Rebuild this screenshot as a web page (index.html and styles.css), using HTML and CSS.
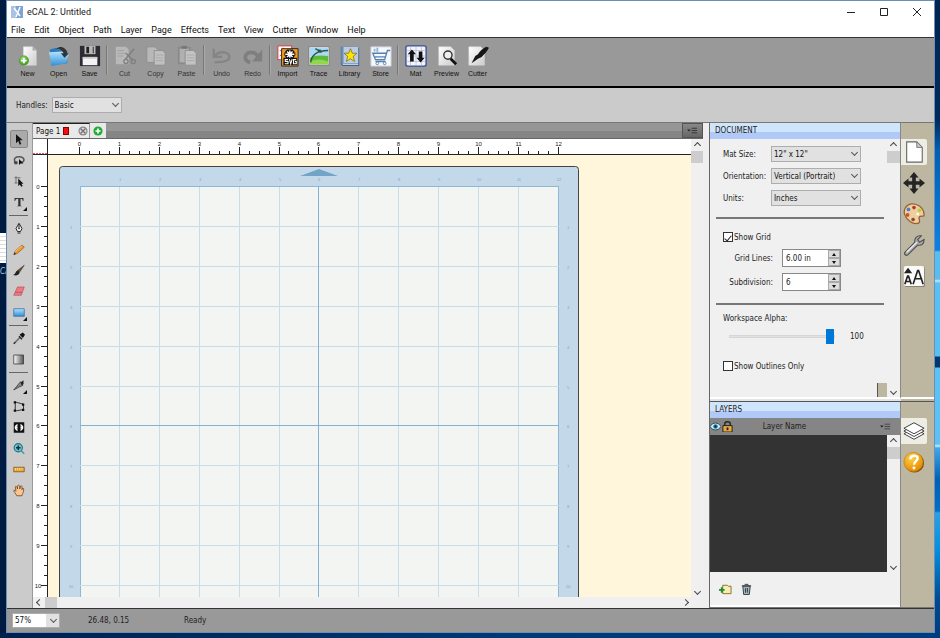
FILE: index.html
```html
<!DOCTYPE html>
<html lang="en">
<head>
<meta charset="utf-8">
<title>eCAL 2: Untitled</title>
<link rel="stylesheet" href="styles.css">
</head>
<body>
<div class="desk desk-left"><span class="desk-icon"></span><span class="desk-name">CA</span></div>
<div class="window">
  <header class="titlebar">
    <svg class="app-icon" viewBox="0 0 12 12"><rect width="12" height="12" fill="#7fa3d6"/><path d="M0 0h5v12H0z" fill="#a9c2e6"/><path d="M3 2l3 4M9 1L5 11M6 6l3 4" stroke="#fff" stroke-width="1.5" fill="none"/></svg>
    <h1>eCAL 2: Untitled</h1>
    <div class="win-buttons">
      <button aria-label="Minimize"><svg viewBox="0 0 10 10"><path d="M1 5.5h8" /></svg></button>
      <button aria-label="Maximize"><svg viewBox="0 0 10 10"><path d="M1.5 1.5h7v7h-7z"/></svg></button>
      <button aria-label="Close"><svg viewBox="0 0 10 10"><path d="M1 1l8 8M9 1l-8 8"/></svg></button>
    </div>
  </header>
  <nav class="menubar">
    <button>File</button><button>Edit</button><button>Object</button><button>Path</button><button>Layer</button><button>Page</button><button>Effects</button><button>Text</button><button>View</button><button>Cutter</button><button>Window</button><button>Help</button>
  </nav>
  <svg width="0" height="0" class="defs"><defs>
    <linearGradient id="paper" x1="0" y1="0" x2="1" y2="1"><stop offset="0" stop-color="#fff"/><stop offset="1" stop-color="#ccc"/></linearGradient>
    <linearGradient id="blue" x1="0" y1="0" x2="0" y2="1"><stop offset="0" stop-color="#b5e2fb"/><stop offset="1" stop-color="#2d8fd8"/></linearGradient>
    <linearGradient id="fade" x1="0" y1="0" x2="1" y2="0"><stop offset="0" stop-color="#fff"/><stop offset="1" stop-color="#555"/></linearGradient>
    <radialGradient id="gold" cx=".4" cy=".3" r=".7"><stop offset="0" stop-color="#ffd24a"/><stop offset="1" stop-color="#e28a00"/></radialGradient>
    <radialGradient id="green" cx=".4" cy=".3" r=".7"><stop offset="0" stop-color="#9be06a"/><stop offset="1" stop-color="#3d9a20"/></radialGradient>
  </defs></svg>
  <div class="toolbar">
    <button><svg viewBox="0 0 24 24"><path d="M7 2h10l4 4v16H7z" fill="url(#paper)" stroke="#ddd" stroke-width=".6"/><path d="M17 2v4h4z" fill="#aaa"/><circle cx="7.500" cy="17" r="5.200" fill="url(#green)" stroke="#4a8f2c" stroke-width=".6"/><path d="M7.500 14v6M4.500 17h6" stroke="#fff" stroke-width="2"/></svg>New</button>
    <button><svg viewBox="0 0 24 24"><path d="M2 5l7-2 2 2 10 1v14L4 22z" fill="#2b78b8"/><path d="M1 8l14-1 8 2-3 11-16 3z" fill="url(#blue)"/><path d="M9 4c5-4 11-1 12 5h2l-5 5-4-5h3c-1-3-4-5-8-5z" fill="#333"/></svg>Open</button>
    <button><svg viewBox="0 0 24 24"><path d="M1 1h22v22H1z" fill="#2b2b31"/><path d="M6 1h12v9H6z" fill="#b9b9bb"/><path d="M8 2h3v7H8zM15 2h1v7h-1z" fill="#222"/><path d="M4 13h16v9H4z" fill="#f3f3f5"/><path d="M4 13h16v2H4z" fill="#ccc"/></svg>Save</button>
    <i class="vsep"></i>
    <button class="off"><svg viewBox="0 0 24 24"><path d="M2 2h11l3 3v16H2z" fill="#b8b8b8"/><path d="M4 6h7M4 9h9M4 12h6" stroke="#a2a2a2"/><path d="M22 4L12 16M13 9l8 8" stroke="#808080" stroke-width="1.800"/><circle cx="13" cy="18" r="2.300" fill="none" stroke="#808080" stroke-width="1.500"/><circle cx="21" cy="18" r="2.300" fill="none" stroke="#808080" stroke-width="1.500"/></svg>Cut</button>
    <button class="off"><svg viewBox="0 0 24 24"><path d="M2 2h9l3 3v14H2z" fill="#b8b8b8" stroke="#8e8e8e"/><path d="M10 6h9l3 3v13H10z" fill="#c0c0c0" stroke="#8e8e8e"/><path d="M12 11h8M12 14h8M12 17h8" stroke="#aaa"/></svg>Copy</button>
    <button class="off"><svg viewBox="0 0 24 24"><path d="M2 2h14v19H2z" fill="#8a8a8a"/><path d="M4 4h10v15H4z" fill="#b0b0b0"/><path d="M6 1h6v3H6z" fill="#777"/><path d="M10 6h9l3 3v13H10z" fill="#c3c3c3" stroke="#8e8e8e"/><path d="M12 11h8M12 14h8M12 17h8" stroke="#aaa"/></svg>Paste</button>
    <i class="vsep"></i>
    <button class="off"><svg viewBox="0 0 24 24"><path d="M3 4v9h9M4 12c6-7 17-4 16 2-1 4-8 5-16 5" fill="none" stroke="#858585" stroke-width="2.500"/></svg>Undo</button>
    <button class="off"><svg viewBox="0 0 24 24"><path d="M9 19c-6-1-7-7-3-10 4-2 10-1 12 5" fill="none" stroke="#7f7f7f" stroke-width="4"/><path d="M22 5v13H11z" fill="#7f7f7f"/></svg>Redo</button>
    <i class="vsep"></i>
    <button><svg viewBox="0 0 24 24"><path d="M1 1h15v15H1z" fill="#fff" stroke="#d33"/><path d="M3 12c5-3 5-7 4-9M3 6c5 1 7 3 9 2" stroke="#d33" fill="none"/><path d="M5 4h18v19H5z" fill="#f79a1c" stroke="#222"/><path d="M14 5v10M8 10h12M10 6l8 8M18 6l-8 8" stroke="#111" stroke-width="3.600"/><path d="M14 6v8M9 10h10M11 7l6 6M17 7l-6 6" stroke="#fff" stroke-width="1.600"/><path d="M7 14h15v8H7z" fill="#111"/><path d="M12 16H9v2h3v2.500H8.500M13.500 15.500l1.500 5 1.500-5M21 16h-3v4.500h3V18h-1.500" stroke="#fff" stroke-width="1.200" fill="none"/></svg>Import</button>
    <button><svg viewBox="0 0 24 24"><path d="M1 2h22v20H1z" fill="#fff" stroke="#777"/><path d="M2 3h20v10H2z" fill="#a9daf5"/><path d="M2 14c6-3 12-3 20-2v9H2z" fill="#5cba36"/><path d="M2 18c7-3 13-3 20 0v3H2z" fill="#91d64c"/><path d="M3 19C4 10 10 6 22 6M8 4l7 4" fill="none" stroke="#35534d" stroke-width="1.500"/><path d="M11 5h3v3h-3z" fill="#255"/></svg>Trace</button>
    <button><svg viewBox="0 0 24 24"><path d="M2 2h19l1 2v19H4l-2-2z" fill="#42638e"/><path d="M3 2h18v18H3z" fill="#b9cce3"/><path d="M3 2h2v18H3z" fill="#718fb5"/><path d="M4 21h17" stroke="#fff"/><path d="M12.500 4l2 5h5l-4 3.500 1.500 5.500-4.500-3-4.500 3L9.500 12.500 5.500 9h5z" fill="#ffe500" stroke="#776b1d" stroke-width=".8"/></svg>Library</button>
    <button><svg viewBox="0 0 24 24"><path d="M1 2h22v21H1z" fill="#f5f8fc" stroke="#ccd"/><path d="M22 6h-3l-3 10H6L3 9h15M5 13h12M6 18h11" fill="none" stroke="#557fae" stroke-width="1.400"/><path d="M8 3v5M5 4v3" stroke="#92b3d5" stroke-width="2"/><circle cx="8" cy="20" r="1.500" fill="#fff" stroke="#557fae"/><circle cx="16" cy="20" r="1.500" fill="#fff" stroke="#557fae"/></svg>Store</button>
    <i class="vsep"></i>
    <button><svg viewBox="0 0 24 24"><rect x="1" y="1" width="22" height="22" rx="2" fill="#f4f4fa" stroke="#3a5296" stroke-width="1.500"/><path d="M6 2v20M12 2v20M18 2v20M2 6h20M2 12h20M2 18h20" stroke="#bcc5dc"/><path d="M7.500 5l4.500 5H9.500v8h-4v-8H3zM17 19l4.500-5H19V7h-4v7h-2.500z" fill="#111"/></svg>Mat</button>
    <button><svg viewBox="0 0 24 24"><path d="M3 2h13l4 4v16H3z" fill="url(#paper)" stroke="#ddd" stroke-width=".5"/><circle cx="13" cy="11" r="4.500" fill="#eee" stroke="#333" stroke-width="1.500"/><path d="M16 15l6 6" stroke="#111" stroke-width="3"/></svg>Preview</button>
    <button><svg viewBox="0 0 24 24"><path d="M2 2h13l4 4v16H2z" fill="url(#paper)" stroke="#ddd" stroke-width=".5"/><path d="M24 3l-3-1c-4 2-7 5-9 8l-3 2-4 8 7-5 4-2c3-3 6-6 8-10z" fill="#161616"/></svg>Cutter</button>
  </div>
  <div class="options">
    <label for="handles">Handles:</label>
    <span class="drop drop-basic"><select id="handles"><option>Basic</option></select></span>
  </div>
  <main class="work">
    <div class="tools">
      <button class="on" aria-label="Select"><svg viewBox="0 0 16 16"><path d="M4 1v12l3-3 2 5 2-1-2-5h4z" fill="#111"/></svg></button>
      <button aria-label="Lasso"><svg viewBox="0 0 16 16"><path d="M3 10c-3-5 1-7 5-7s8 2 6 6c-1 2-3 1-5 1" fill="none" stroke="#555" stroke-width="2"/><path d="M1 9h5v4H2z" fill="#444"/><path d="M8 6v8l2-2h4z" fill="#111"/></svg></button>
      <button aria-label="Edit points"><svg viewBox="0 0 16 16"><path d="M2 3h8M4 1v9M2 10h4" fill="none" stroke="#555"/><path d="M7 4v10l2-2 2 3 2-1-2-3h3z" fill="#111"/></svg></button>
      <button class="more" aria-label="Text"><svg viewBox="0 0 16 16"><path d="M2 2h12v4h-1c0-2-1-3-3-3v9l2 1H5l2-1V3C4 3 3 4 3 6H2z" fill="#333"/></svg></button>
      <i class="hsep"></i>
      <button aria-label="Pen"><svg viewBox="0 0 16 16"><path d="M8 1l4 7-2 4H6L4 8zM8 2v6M6 14h4" fill="#eee" stroke="#222" stroke-width="1.300"/><circle cx="8" cy="8" r="1" fill="#222"/></svg></button>
      <button aria-label="Pencil"><svg viewBox="0 0 16 16"><path d="M1 15l2-5 9-8 3 3-9 8z" fill="#f0962a" stroke="#85521c" stroke-width=".8"/><path d="M3 11l9-8" stroke="#ffd58a"/><path d="M1 15l1-3 2 2z" fill="#222"/></svg></button>
      <button aria-label="Brush"><svg viewBox="0 0 16 16"><path d="M15 1L9 10 6 8z" fill="#7a4b22" stroke="#222" stroke-width=".6"/><path d="M7 8l2 3c-2 4-5 4-9 3 4-1 3-6 7-6z" fill="#222"/></svg></button>
      <button aria-label="Eraser"><svg viewBox="0 0 16 16"><path d="M6 2h9l-4 11H1z" fill="#ef7a86" stroke="#b14350" stroke-width=".8"/><path d="M3 9h9" stroke="#b14350"/></svg></button>
      <button class="more" aria-label="Rectangle"><svg viewBox="0 0 16 16"><path d="M1 3h14v10H1z" fill="url(#blue)" stroke="#33699b"/></svg></button>
      <i class="hsep"></i>
      <button aria-label="Eyedropper"><svg viewBox="0 0 16 16"><path d="M10 3l3-2 2 2-2 3z" fill="#111" stroke="#111" stroke-width="1.500"/><path d="M8 5l4 4M10 6l-7 7-2 2" stroke="#222" stroke-width="2"/><path d="M9 7l-6 6" stroke="#eee"/></svg></button>
      <button aria-label="Gradient"><svg viewBox="0 0 16 16"><path d="M1 2h13v12H1z" fill="url(#fade)" stroke="#333"/></svg></button>
      <i class="hsep"></i>
      <button class="more" aria-label="Knife"><svg viewBox="0 0 16 16"><path d="M1 14L10 3l3 5-5 2z" fill="#888" stroke="#333"/><path d="M10 4l4-3v5l-2 2z" fill="#222"/></svg></button>
      <button aria-label="Distort"><svg viewBox="0 0 16 16"><path d="M3 2l11 3v7L3 14z" fill="none" stroke="#333" stroke-width="1.300"/><path d="M1 1h3v3H1zM12 4h3v3h-3zM12 11h3v3h-3zM1 12h3v3H1z" fill="#111"/></svg></button>
      <button aria-label="Envelope"><svg viewBox="0 0 16 16"><path d="M1 1h14v14H1z" fill="#111"/><path d="M6 3c-5 3-5 7 0 10V9H4l3-1-3-1h2zM10 3c5 3 5 7 0 10V9h2L9 8l3-1h-2z" fill="#fff"/></svg></button>
      <button aria-label="Zoom"><svg viewBox="0 0 16 16"><circle cx="7" cy="7" r="5.500" fill="#67c6cf" stroke="#276d80" stroke-width="1.500"/><path d="M7 4v6M4 7h6" stroke="#0b303b" stroke-width="2"/><path d="M11 11l4 4" stroke="#4a93a8" stroke-width="2"/></svg></button>
      <button aria-label="Ruler"><svg viewBox="0 0 16 16"><path d="M1 5h14v6H1z" fill="#e9a83a" stroke="#7c5010"/><path d="M3 6v3M6 6v2M9 6v3M12 6v2" stroke="#fff2c0"/></svg></button>
      <button aria-label="Hand"><svg viewBox="0 0 16 16"><path d="M5 15C4 12 1 10 1 8c2-1 2 1 3 1L3 3c1-1 2-1 3 3V2c1-2 2-1 3 0v4l1-4c1-1 2 0 2 1v4l1-2c2 0 1 2 1 4s-2 4-2 6z" fill="#f8c690" stroke="#6e3e17"/></svg></button>
    </div>
    <section class="editor">
      <div class="tabs">
        <div class="tab"><button class="tab-name">Page 1</button><i class="swatch"></i><button class="round" aria-label="Close page"><svg viewBox="0 0 12 12"><circle cx="6" cy="6" r="5.500" fill="#888"/><circle cx="6" cy="6" r="4" fill="#ddd"/><path d="M3 3l6 6M9 3l-6 6" stroke="#777" stroke-width="1.800"/></svg></button></div>
        <button class="round add" aria-label="Add page"><svg viewBox="0 0 12 12"><circle cx="6" cy="6" r="5.500" fill="#1fac35"/><path d="M6 3v6M3 6h6" stroke="#fff" stroke-width="2"/></svg></button>
        <button class="burger" aria-label="Page menu"><svg viewBox="0 0 12 10"><path d="M0 4h4L2 6z" fill="#222"/><path d="M5 2.500h6M5 5h6M5 7.500h6" stroke="#333"/></svg></button>
      </div>
      <div class="stage">
        <svg class="ruler-x" id="rulerX"></svg>
        <svg class="ruler-y" id="rulerY"></svg>
        <svg class="mat" id="mat"></svg>
        <div class="scroll scroll-y"><button class="arrow up" aria-label="Scroll up"></button><i class="thumb"></i><button class="arrow down" aria-label="Scroll down"></button></div>
        <div class="scroll scroll-x"><button class="arrow left" aria-label="Scroll left"></button><i class="thumb"></i><button class="arrow right" aria-label="Scroll right"></button></div>
      </div>
    </section>
    <div class="side">
      <section class="dock dock-document">
        <div class="panel">
          <h2>DOCUMENT</h2>
          <div class="panel-row">
            <form class="props">
              <div class="fields">
                <label for="size">Mat Size:</label><span class="drop"><select id="size"><option>12" x 12"</option></select></span>
                <label for="orient">Orientation:</label><span class="drop"><select id="orient"><option>Vertical (Portrait)</option></select></span>
                <label for="units">Units:</label><span class="drop"><select id="units"><option>Inches</option></select></span>
              </div>
              <hr>
              <div class="check"><input type="checkbox" id="grid" checked><label for="grid">Show Grid</label></div>
              <div class="numbers">
                <label for="lines">Grid Lines:</label><span class="spin"><input id="lines" type="text" value="6.00 in"><span class="steps"><button type="button" aria-label="More"></button><button type="button" class="less" aria-label="Less"></button></span></span>
                <label for="sub">Subdivision:</label><span class="spin"><input id="sub" type="text" value="6"><span class="steps"><button type="button" aria-label="More"></button><button type="button" class="less" aria-label="Less"></button></span></span>
              </div>
              <hr>
              <label class="alpha" for="alpha">Workspace Alpha:</label>
              <div class="slide"><input type="range" id="alpha" min="0" max="100" value="100"><output for="alpha">100</output></div>
              <div class="check last"><input type="checkbox" id="outline"><label for="outline">Show Outlines Only</label></div>
              <i class="corner"></i>
            </form>
            <div class="scroll scroll-y"><button class="arrow up" aria-label="Scroll up"></button><i class="thumb"></i><button class="arrow down" aria-label="Scroll down"></button></div>
          </div>
        </div>
        <div class="strip">
          <button class="on" aria-label="Document"><svg viewBox="0 0 24 24"><path d="M4 1h11l6 6v16H4z" fill="#fff" stroke="#666" stroke-width="1.200"/><path d="M15 1v6h6z" fill="#ccc" stroke="#777"/></svg></button>
          <button aria-label="Position"><svg viewBox="0 0 24 24"><path d="M12 0l5 6h-3v4h4V7l6 5-6 5v-3h-4v4h3l-5 6-5-6h3v-4H6v3l-6-5 6-5v3h4V6H7z" fill="#242424"/></svg></button>
          <button aria-label="Colors"><svg viewBox="0 0 24 24"><path d="M9 1C3 2 0 8 2 13c2 6 9 11 15 9 3-2-1-5 1-7s5 1 5-2C23 5 15 0 9 1z" fill="#edcf9f" stroke="#946332" stroke-width="1.400"/><circle cx="6" cy="7" r="2" fill="#4f7cc8"/><circle cx="12" cy="5" r="2" fill="#b53731"/><circle cx="18" cy="8" r="2" fill="#bccd36"/><circle cx="5" cy="13" r="2" fill="#cf4b32"/><circle cx="11" cy="18" r="2" fill="#9b422c"/><circle cx="16" cy="12" r="1.500" fill="#fff"/></svg></button>
          <button aria-label="Settings"><svg viewBox="0 0 24 24"><path d="M2 20L13 9c-1-4 2-8 7-7l-4 4 2 3 5-3c0 5-3 7-7 6L5 23c-2 1-4-1-3-3z" fill="#aaa" stroke="#4f4f4f" stroke-width="1.200"/><path d="M4 20L15 9" stroke="#eee" stroke-width="1.500"/></svg></button>
          <button aria-label="Type"><svg viewBox="0 0 24 24"><rect x="2" y="2" width="22" height="22" rx="2" fill="#8a8470"/><rect x="1" y="1" width="22" height="22" rx="2" fill="#fafafa"/><path d="M1 9l4.500-6L10 9z" fill="#222"/><path d="M2 21l3-9h1l3 9M3 18h5M11 21l5-15h1l5 15M13 15h8" fill="none" stroke="#222" stroke-width="1.800"/></svg></button>
        </div>
      </section>
      <section class="dock dock-layers">
        <div class="panel">
          <h2>LAYERS</h2>
          <table><thead><tr>
            <th class="eye"><svg viewBox="0 0 12 12"><path d="M0 6c3-5 9-5 12 0-3 5-9 5-12 0z" fill="#d7edf8" stroke="#245"/><circle cx="6" cy="6" r="2.500" fill="#167ba7"/><circle cx="6" cy="6" r="1" fill="#012"/></svg></th>
            <th class="lock"><svg viewBox="0 0 12 12"><path d="M3 6V3c0-3 6-3 6 0v3" fill="none" stroke="#222" stroke-width="1.500"/><path d="M1 5h10v7H1z" fill="#e6a843" stroke="#221a0c"/><path d="M6 7v3" stroke="#222" stroke-width="2"/></svg></th>
            <th class="name">Layer Name</th>
            <th class="menu"><svg viewBox="0 0 12 10"><path d="M0 4h4L2 6z" fill="#222"/><path d="M5 2.500h6M5 5h6M5 7.500h6" stroke="#444"/></svg></th>
          </tr></thead></table>
          <div class="panel-row"><div class="layer-list"></div>
            <div class="scroll scroll-y"><button class="arrow up" aria-label="Scroll up"></button><i class="thumb"></i><button class="arrow down" aria-label="Scroll down"></button></div>
          </div>
          <div class="layer-tools">
            <button aria-label="New layer"><svg viewBox="0 0 14 12"><path d="M4 2h5l1 1h3v8H4z" fill="#f4edb6" stroke="#8b6b22"/><path d="M3 4v6M0 7h6" stroke="#1e8b25" stroke-width="2"/></svg></button>
            <button aria-label="Delete layer"><svg viewBox="0 0 14 12"><path d="M3 3h8l-1 9H4z" fill="#9eb6c6" stroke="#333"/><path d="M2 2.500h10M5 1h4M6 5v5M8 5v5" stroke="#333"/></svg></button>
          </div>
        </div>
        <div class="strip">
          <button class="on" aria-label="Layers"><svg viewBox="0 0 24 24"><path d="M12 9l11 6-11 6-11-6z" fill="#fff" stroke="#333"/><path d="M12 6l11 6-11 6-11-6z" fill="#fff" stroke="#333"/><path d="M12 3l11 6-11 6L1 9z" fill="#fff" stroke="#333"/></svg></button>
          <button aria-label="Help"><svg viewBox="0 0 24 24"><circle cx="12.500" cy="13" r="10.500" fill="#75501a"/><circle cx="11.500" cy="12" r="10.500" fill="url(#gold)" stroke="#bb7308" stroke-width=".6"/><path d="M8 9c0-5 8-5 8-1 0 3-4 3-4 7" fill="none" stroke="#fff" stroke-width="2.600"/><circle cx="12" cy="18.500" r="1.600" fill="#fff"/></svg></button>
        </div>
      </section>
    </div>
  </main>
  <footer class="status">
    <span class="drop zoom"><select aria-label="Zoom level"><option>57%</option></select></span>
    <span class="coords">26.48, 0.15</span><span>Ready</span>
  </footer>
</div>
<div class="desk desk-right"></div>
<script src="app.js"></script>
</body>
</html>
```
FILE: styles.css
```css
* { box-sizing: border-box; }
body {
  margin: 0;
  height: 100vh;
  display: grid;
  grid-template-columns: 6px minmax(0, 1fr) 5px;
  padding-bottom: 5px;
  background: linear-gradient(90deg, #00204c, #003a78 55%, #003d80);
  font-family: "DejaVu Sans Condensed", "DejaVu Sans", sans-serif;
  font-size: 8px;
  color: #222;
  overflow: hidden;
}
button, select, input { font: inherit; color: inherit; margin: 0; }
button { border: 0; padding: 0; background: none; display: flex; align-items: center; justify-content: center; }
svg { display: block; }
.defs { position: absolute; }
.desk-left { background: #001b42; padding-top: 233px; overflow: hidden; }
.desk-icon { display: block; height: 30px; background: repeating-linear-gradient(#fff 0 3px, #ddd 3px 4px); }
.desk-name { display: block; color: #a9c4e0; line-height: 18px; font-style: italic; }
.desk-right { background: linear-gradient(#002450 0, #002b5c 120px, #0060b0 150px, #0a80e0 240px, #0a80e0 250px, #58bdf0 252px, #58bdf0 279px, #c5eefe 281px, #5abff2 283px, #5abff2 356px, #00376f 357px, #00376f 367px, #5cc2f5 368px, #5cc2f5 444px, #c5eefe 446px, #3fa8ea 448px, #0060b4 480px, #0070c8 511px, #2aa0e8 513px, #0090e0 550px, #004a90 600px, #003d80); }
.window { display: flex; flex-direction: column; min-height: 0; min-width: 0; border: 1px solid #6e8fb4; background: #efefef; }

.titlebar { height: 21px; flex: none; background: #fff; display: flex; align-items: center; padding: 0 1px 0 4px; font-family: Roboto, sans-serif; }
.titlebar h1 { margin: 0 0 0 4px; font-size: 9px; font-weight: 400; line-height: 12px; }
.app-icon { width: 12px; height: 12px; }
.win-buttons { margin-left: auto; display: flex; }
.win-buttons button { width: 33px; height: 20px; }
.win-buttons svg { width: 10px; height: 10px; fill: none; stroke: #222; }
.menubar { height: 15px; flex: none; background: #fff; display: flex; gap: 9px; padding-left: 4px; font-family: Roboto, sans-serif; font-size: 9px; color: #111; }

.toolbar { height: 51px; flex: none; background: #999; border-top: 1px solid #333; border-bottom: 2px solid #000; display: flex; align-items: flex-start; padding: 7px 0 0 5px; }
.toolbar button { width: 31px; flex-direction: column; gap: 2px; font: 7px/10px "Liberation Sans", sans-serif; color: #111; }
.toolbar .off { color: #333; }
.toolbar svg { width: 22px; height: 22px; }
.vsep { width: 2px; margin: 0 1px; height: 30px; border-left: 1px solid #777; border-right: 1px solid #aaa; }

.options { height: 34px; flex: none; background: #cbcbcb; display: flex; align-items: center; gap: 4px; padding-left: 9px; }
.drop { position: relative; display: block; height: 16px; }
.drop select { appearance: none; display: block; width: 100%; height: 100%; border: 1px solid #adadad; border-radius: 0; background: #e1e1e1; padding: 0 12px 0 2px; color: #111; }
.drop::after { content: ""; position: absolute; right: 4px; top: 4px; width: 4px; height: 4px; border: solid #555; border-width: 0 1px 1px 0; transform: rotate(45deg); pointer-events: none; }
.drop-basic { width: 70px; }

.work { flex: 1; min-height: 0; display: grid; grid-template-columns: 26px minmax(0, 1fr) 6px 225px; border-top: 1px solid #777; }
.tools { background: #cbcbcb; border-right: 1px solid #999; padding: 6px 2px 0 0; display: flex; flex-direction: column; align-items: center; }
.tools button { position: relative; width: 18px; height: 21px; border-radius: 2px; flex: none; }
.tools .on { background: #aaa; border: 1px solid #888; height: 18px; margin: 1px 0 2px; }
.tools svg { width: 12px; height: 13px; }
.tools .more::after { content: ""; position: absolute; right: 1px; bottom: 2px; border: 2px solid #111; border-top-color: transparent; border-left-color: transparent; }
.hsep { width: 19px; height: 1px; background: #666; margin: 2px 0; flex: none; }

.editor { display: flex; flex-direction: column; min-height: 0; min-width: 0; }
.tabs { height: 16px; flex: none; display: flex; background: linear-gradient(#969696 50%, #858585 50%); border-bottom: 1px solid #666; }
.tab { display: flex; align-items: center; width: 57px; background: #e9e9e9; padding-left: 3px; border-top: 1px solid #222; border-right: 1px solid #999; }
.tab-name { font-size: 8px; color: #111; }
.swatch { width: 6px; height: 8px; background: #e11; border: 1px solid #800; margin-left: 3px; }
.round svg { width: 10px; height: 10px; }
.tab .round { margin-left: auto; margin-right: 1px; }
.add { width: 16px; background: #e9e9e9; }
.burger { margin-left: auto; width: 21px; background: linear-gradient(#888, #666); border: 1px solid #555; }
.burger svg { width: 11px; height: 9px; }
.stage { flex: 1; min-height: 0; display: grid; grid-template: 16px minmax(0, 1fr) 11px / 15px minmax(0, 1fr) 12px; }
.ruler-x { grid-area: 1 / 1 / 2 / 3; width: 100%; height: 100%; background: #fff; border-bottom: 1px solid #222; }
.ruler-y { grid-area: 2 / 1; width: 100%; height: 100%; background: #fff; border-right: 1px solid #222; }
.ruler-x text, .ruler-y text { font: 6px "Liberation Sans", sans-serif; fill: #222; text-anchor: middle; }
.ruler-x path, .ruler-y path { stroke: #222; }
.ruler-x .origin { stroke: #e55; stroke-dasharray: 2 1; }
.mat { grid-area: 2 / 2; width: 100%; height: 100%; background: #fff6db; }
.mat text { font: 4px "Liberation Sans", sans-serif; fill: #7fa5c6; text-anchor: middle; }
.board { fill: #c3d9e9; stroke: #444; }
.sheet { fill: #f3f5f3; stroke: #8fb8d4; }
.cells { stroke: #c8dcea; }
.axis { stroke: #87b1d0; }
.mark { fill: #72a4c8; }

.scroll { display: flex; background: #f0f0f0; justify-content: space-between; }
.scroll-y { flex-direction: column; }
.stage .scroll-y { grid-area: 1 / 3 / 3 / 4; }
.stage .scroll-x { grid-area: 3 / 1 / 4 / 3; }
.thumb { background: #cdcdcd; flex: none; }
.scroll-y .thumb { height: 12px; margin: 0 0 auto; }
.scroll-x .thumb { width: 12px; margin-right: auto; }
.arrow { width: 12px; height: 12px; flex: none; align-self: center; }
.arrow::before { content: ""; width: 4px; height: 4px; border: solid #444; border-width: 1px 0 0 1px; }
.up::before { transform: rotate(45deg); }
.right::before { transform: rotate(135deg); }
.down::before { transform: rotate(225deg); }
.left::before { transform: rotate(315deg); }

.side { grid-column: 4; display: flex; flex-direction: column; min-height: 0; }
.dock { display: grid; grid-template-columns: minmax(0, 1fr) 33px; min-height: 0; border-left: 1px solid #666; }
.dock-document { flex: none; border-bottom: 1px solid #555; }
.dock-document .panel, .dock-document .strip { border-bottom: 2px solid #fff; margin-bottom: 2px; }
.dock-document { background: linear-gradient(90deg, #e4e4e4 191px, #bdb7a2 191px); }
.dock-layers { flex: 1; border-bottom: 1px solid #777; }
.panel { display: flex; flex-direction: column; min-height: 0; border-right: 1px solid #888; background: #f0f0f0; }
.panel h2 { margin: 0; height: 16px; flex: none; background: linear-gradient(#cfe5fb 55%, #b1c9f7 55%); font-size: 8px; font-weight: 400; line-height: 16px; padding-left: 5px; }
.panel-row { flex: 1; min-height: 0; display: flex; }
.panel-row .scroll { width: 13px; margin-left: auto; }
.props { flex: 1; position: relative; padding: 7px 0 25px 13px; }
.fields { display: grid; grid-template-columns: 42px 90px; column-gap: 6px; row-gap: 6px; align-items: center; }
.fields label { white-space: nowrap; }
.props hr { margin: 12px 3px 12px -7px; border: 0; height: 2px; background: #777; }
.props .fields + hr { margin-top: 11px; }
.check { display: flex; align-items: center; gap: 1px; height: 12px; }
.check input { appearance: none; width: 10px; height: 10px; border: 1px solid #333; background: #fff; display: grid; place-items: center; }
.check input:checked::before { content: ""; width: 3px; height: 6px; border: solid #222; border-width: 0 1px 1px 0; transform: rotate(40deg); }
.numbers { display: grid; grid-template-columns: 50px 59px; column-gap: 9px; row-gap: 6px; align-items: center; margin-top: 6px; text-align: right; }
.spin { display: flex; height: 18px; border: 1px solid #888; background: #fff; }
.spin input { border: 0; padding: 0 3px; min-width: 0; flex: 1; background: none; }
.steps { width: 12px; display: grid; }
.steps button { background: #ddd; border: 1px solid #aaa; }
.steps button::before { content: ""; border: 2px solid transparent; border-top: 0; border-bottom: 3px solid #111; }
.steps .less::before { transform: rotate(180deg); }
.props .numbers + hr { margin-bottom: 8px; }
.alpha { display: block; line-height: 12px; }
.slide { display: flex; align-items: center; gap: 15px; margin-top: 3px; padding-left: 6px; height: 16px; }
.slide input { appearance: none; width: 106px; height: 16px; background: none; }
.slide input::-webkit-slider-runnable-track { height: 3px; background: #e2e2e2; border: 1px solid #d6d6d6; }
.slide input::-webkit-slider-thumb { appearance: none; width: 8px; height: 15px; margin-top: -7px; background: #0078d7; }
.last { margin-top: 16px; }
.corner { position: absolute; right: 0; bottom: 0; width: 10px; height: 14px; background: #bdb7a2; border-left: 1px solid #555; }

.strip { background: #bdb7a2; display: flex; flex-direction: column; gap: 5px; padding-top: 16px; }
.strip button { width: 26px; height: 26px; flex: none; }
.strip .on { background: #eeede4; border-radius: 0 2px 2px 0; }
.strip svg { width: 22px; height: 22px; }
.panel table { border-collapse: collapse; width: 100%; height: 17px; flex: none; background: #858585; table-layout: fixed; }
.panel th { padding: 0; font-weight: 400; text-align: center; }
.panel .eye, .panel .lock { width: 12px; }
.panel .name { padding-right: 45px; }
.panel .menu { width: 20px; }
.panel th svg { width: 11px; height: 11px; }
.layer-list { flex: 1; background: #333; }
.layer-tools { height: 35px; flex: none; display: flex; gap: 8px; align-items: center; padding-left: 9px; border-bottom: 2px solid #fff; }
.layer-tools svg { width: 13px; height: 12px; }

.status { height: 24px; flex: none; background: #999; border-top: 1px solid #333; display: flex; align-items: center; padding-left: 5px; }
.zoom { width: 48px; height: 15px; margin-right: 28px; }
.zoom select { background: linear-gradient(90deg, #fff 33px, #e1e1e1 33px); }
.coords { width: 96px; }
```
FILE: app.js
```js
// Rulers and mat share one scale: pixels per inch at the current zoom.
const INCH = 39.9;
const at = n => Math.round(n * INCH);
const $ = id => document.getElementById(id);

function draw() {
  const height = $('mat').clientHeight;

  // Horizontal ruler: zero sits 47px from its left edge.
  let ticks = '', labels = '';
  for (let q = 0; q <= 48; q++) {
    const x = 47 + at(q / 4) - 0.5;
    const major = q % 4 === 0;
    ticks += `M${x} ${major ? 8 : 12}V15`;
    if (major) labels += `<text x="${x}" y="7">${q / 4}</text>`;
  }
  $('rulerX').innerHTML =
    `<path d="${ticks}M14.5 0V16"/><path class="origin" d="M0 14.5H14"/>${labels}`;

  // Vertical ruler: zero sits 32px below its top edge.
  ticks = ''; labels = '';
  for (let q = 0; q <= 48; q++) {
    const y = 32 + at(q / 4) - 0.5;
    if (y + 4 > height) break;
    const major = q % 4 === 0;
    ticks += `M${major ? 8 : 11} ${y}H15`;
    if (major) labels += `<text x="5" y="${y + 2.5}">${q / 4}</text>`;
  }
  $('rulerY').innerHTML = `<path d="${ticks}"/>${labels}`;

  // Cutting mat: a rounded board with a 12 by 12 inch sheet.
  const X = 32, Y = 32, side = at(12), mid = at(6);
  let cells = '', marks = '';
  for (let i = 1; i < 12; i++) {
    const p = at(i);
    if (i !== 6) cells += `M${X + p - 0.5} ${Y}v${side}M${X} ${Y + p - 0.5}h${side}`;
  }
  for (let i = 1; i <= 12; i++) {
    const p = at(i);
    marks += `<text x="${X + p}" y="26">${i}</text>`;
    if (Y + p + 4 < height) {
      marks += `<text x="${X - 9}" y="${Y + p + 2}">${i}</text>` +
        `<text x="${X + side + 9}" y="${Y + p + 2}">${i}</text>`;
    }
  }
  $('mat').innerHTML =
    `<rect class="board" x="11.5" y="11.5" width="519" height="519" rx="3"/>` +
    `<rect class="sheet" x="${X + 0.5}" y="${Y - 0.5}" width="${side - 1}" height="${side}"/>` +
    `<path class="cells" d="${cells}"/>` +
    `<path class="axis" d="M${X + mid - 0.5} ${Y}v${side}M${X} ${Y + mid - 0.5}h${side}"/>` +
    `<path class="mark" d="M${X + mid - 19} 21l19-7 19 7z"/>${marks}`;
}

draw();
addEventListener('resize', draw);
```
